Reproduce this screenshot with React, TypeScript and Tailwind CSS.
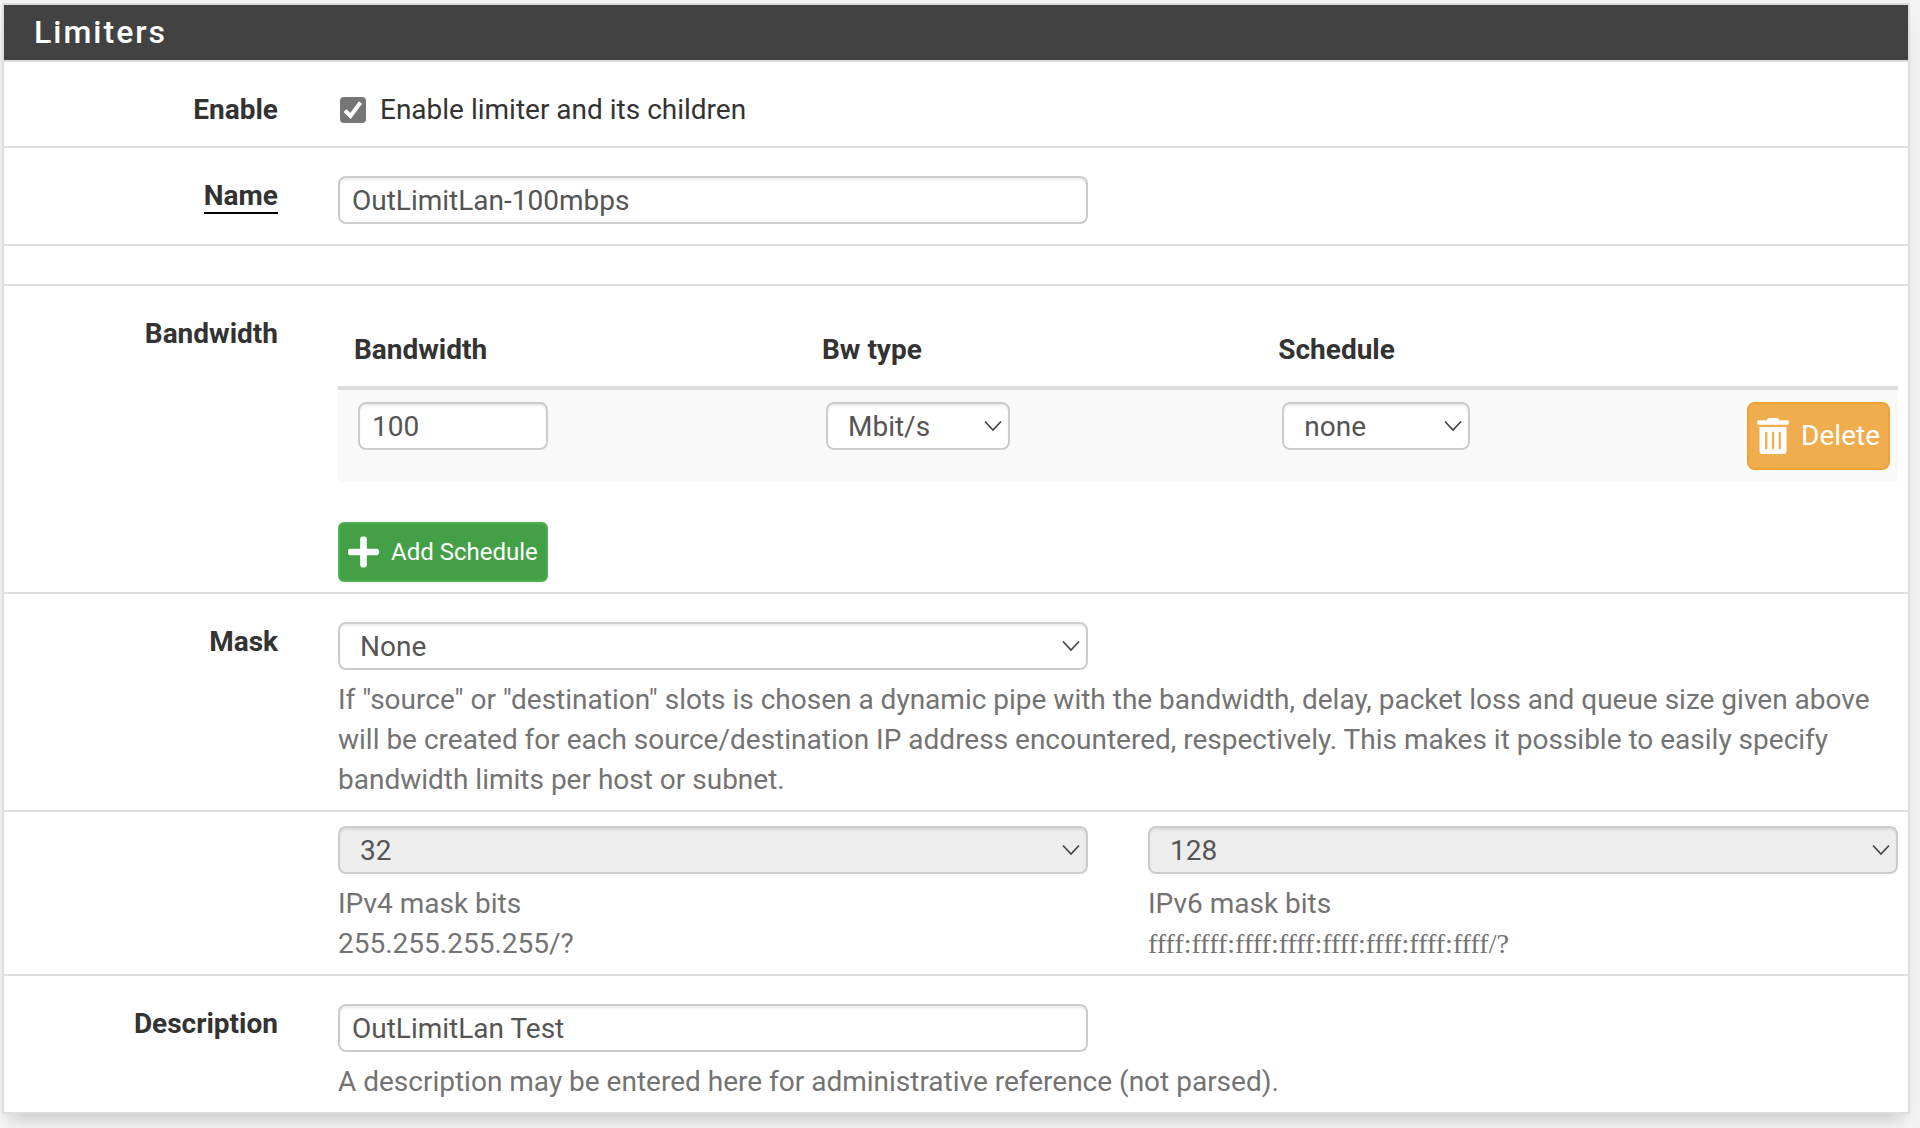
import { useState } from "react";
import type { ReactNode, SelectHTMLAttributes, InputHTMLAttributes } from "react";
import { FaPlus, FaTrashAlt } from "react-icons/fa";

const CONTROL =
  "block h-12 w-full rounded-lg border-2 border-[#ccc] text-[28px] leading-10 text-[#555] shadow-[inset_0_2px_2px_rgba(0,0,0,0.075)] outline-none disabled:bg-[#eee] disabled:opacity-100";

function TextBox(props: InputHTMLAttributes<HTMLInputElement>) {
  return <input type="text" {...props} className={`${CONTROL} bg-white px-3`} />;
}

function Select({ options, ...rest }: SelectHTMLAttributes<HTMLSelectElement> & { options: string[] }) {
  return (
    <div className="relative">
      <select {...rest} className={`${CONTROL} appearance-none bg-white pt-0.5 pr-10 pl-5`}>
        {options.map((o) => (
          <option key={o}>{o}</option>
        ))}
      </select>
      <svg
        className="pointer-events-none absolute top-[18px] right-2 h-3 w-[18px]"
        viewBox="0 0 18 12"
        fill="none"
        stroke="#444"
        strokeWidth="1.7"
      >
        <path d="M1 1.500 9 10l8-8.500" />
      </svg>
    </div>
  );
}

function Row({
  label,
  htmlFor,
  required,
  className,
  children,
}: {
  label?: string;
  htmlFor?: string;
  required?: boolean;
  className: string;
  children?: ReactNode;
}) {
  return (
    <div className="border-b-2 border-[#ddd] last:border-b-0">
      <div className="-mx-5 flex">
        <div className="w-1/6 shrink-0 px-[30px] pt-7 text-right font-bold">
          {label && (
            <label htmlFor={htmlFor}>
              {required ? (
                <span className="inline-block border-b-2 border-black leading-8">{label}</span>
              ) : (
                label
              )}
            </label>
          )}
        </div>
        <div className={`w-5/6 ${className}`}>{children}</div>
      </div>
    </div>
  );
}

export default function App() {
  const [enabled, setEnabled] = useState(true);

  return (
    <div className="min-h-screen bg-[#f3f3f3] pt-[3px] pr-2.5 pb-3.5 pl-0.5 font-['Roboto',sans-serif] text-[28px] leading-10 text-[#333]">
      <main className="border-2 border-[#ddd] bg-white shadow-[0_12px_16px_-8px_rgba(0,0,0,0.2)]">
        <h2 className="border-b-2 border-[#ddd] bg-[#424242] px-[30px] pt-[7px] pb-2 text-[32px] leading-10 font-medium tracking-[2px] text-white">
          Limiters
        </h2>

        <Row label="Enable" htmlFor="enable" className="px-[30px] pt-7 pb-4">
          <div className="flex items-center">
            <span className="relative ml-0.5 flex size-[26px]">
              <input
                id="enable"
                type="checkbox"
                checked={enabled}
                onChange={(e) => setEnabled(e.target.checked)}
                className="peer size-[26px] appearance-none rounded border-2 border-[#767676] checked:bg-[#767676]"
              />
              <svg
                className="pointer-events-none absolute inset-0 hidden peer-checked:block"
                viewBox="0 0 26 26"
                fill="none"
                stroke="#fff"
                strokeWidth="4"
              >
                <path d="M5 13.500 10.500 19 20.500 5.500" />
              </svg>
            </span>
            <label htmlFor="enable" className="ml-3.5">
              Enable limiter and its children
            </label>
          </div>
        </Row>

        <Row label="Name" htmlFor="name" required className="px-[30px] pt-7 pb-5">
          <div className="w-1/2 pr-[30px]">
            <TextBox id="name" defaultValue="OutLimitLan-100mbps" />
          </div>
        </Row>

        <div className="h-10 border-b-2 border-[#ddd]" />

        <Row label="Bandwidth" htmlFor="bandwidth" className="px-[30px] pt-7 pb-2.5">
          <table className="mb-10 w-full table-fixed">
            <thead>
              <tr className="border-b-4 border-[#ddd] text-left">
                <th className="w-[30%] p-4">Bandwidth</th>
                <th className="w-[29.25%] p-4">Bw type</th>
                <th className="p-4">Schedule</th>
                <td className="w-[12%]" />
              </tr>
            </thead>
            <tbody>
              <tr className="bg-[#f9f9f9] align-top">
                <td className="px-5 py-3">
                  <div className="w-[190px]">
                    <TextBox id="bandwidth" defaultValue="100" />
                  </div>
                </td>
                <td className="px-5 py-3">
                  <div className="w-[184px]">
                    <Select aria-label="Bw type" options={["Mbit/s", "Kbit/s", "bit/s"]} />
                  </div>
                </td>
                <td className="px-5 py-3">
                  <div className="w-[188px]">
                    <Select aria-label="Schedule" options={["none"]} />
                  </div>
                </td>
                <td className="py-3 pr-2">
                  <button
                    type="button"
                    className="ml-auto flex h-[68px] items-center rounded-lg border-2 border-[#eea236] bg-[#f0ad4e] px-2 text-white"
                  >
                    <FaTrashAlt className="mr-3 h-9 w-8" />
                    Delete
                  </button>
                </td>
              </tr>
            </tbody>
          </table>
          <button
            type="button"
            className="flex h-[60px] items-center rounded-md border-2 border-[#4caf50] bg-[#43a047] px-2 text-[24px] text-white"
          >
            <FaPlus className="mr-3 h-9 w-[31px]" />
            Add Schedule
          </button>
        </Row>

        <Row label="Mask" htmlFor="mask" className="px-[30px] pt-7 pb-2.5">
          <div className="w-1/2 pr-[30px]">
            <Select id="mask" options={["None", "Source addresses", "Destination addresses"]} />
          </div>
          <p className="mt-2.5 text-[#737373]">
            If "source" or "destination" slots is chosen a dynamic pipe with the bandwidth, delay, packet loss and queue
            size given above will be created for each source/destination IP address encountered, respectively. This
            makes it possible to easily specify bandwidth limits per host or subnet.
          </p>
        </Row>

        <Row className="grid grid-cols-2 pt-3.5 pb-2.5 text-[#737373]">
          <div className="px-[30px]">
            <Select aria-label="IPv4 mask bits" disabled options={["32"]} />
            <p className="mt-2.5">IPv4 mask bits</p>
            <p>255.255.255.255/?</p>
          </div>
          <div className="px-[30px]">
            <Select aria-label="IPv6 mask bits" disabled options={["128"]} />
            <p className="mt-2.5">IPv6 mask bits</p>
            <p className="font-['Liberation_Serif',serif]">ffff:ffff:ffff:ffff:ffff:ffff:ffff:ffff/?</p>
          </div>
        </Row>

        <Row label="Description" htmlFor="description" className="px-[30px] pt-7 pb-2.5">
          <div className="w-1/2 pr-[30px]">
            <TextBox id="description" defaultValue="OutLimitLan Test" />
          </div>
          <p className="mt-2.5 text-[#737373]">
            A description may be entered here for administrative reference (not parsed).
          </p>
        </Row>
      </main>
    </div>
  );
}
